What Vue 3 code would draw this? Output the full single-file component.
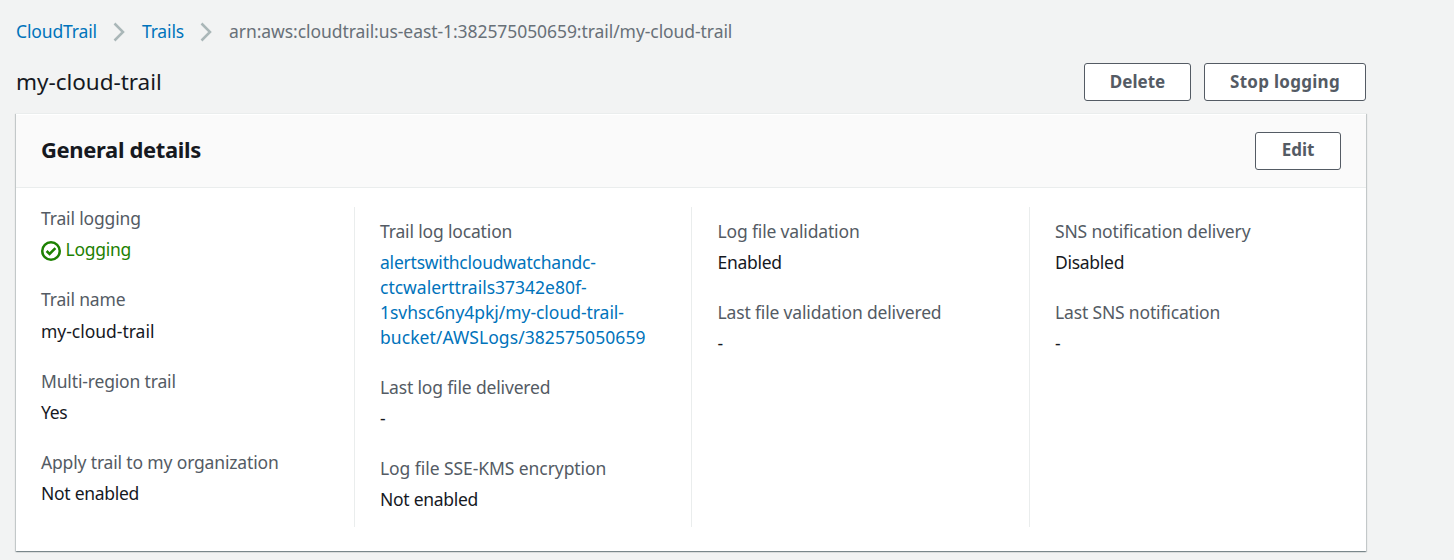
<script setup>
const columns = [
  [
    { label: 'Trail logging', value: 'Logging', kind: 'status' },
    { label: 'Trail name', value: 'my-cloud-trail', kind: 'name' },
    { label: 'Multi-region trail', value: 'Yes' },
    { label: 'Apply trail to my organization', value: 'Not enabled' },
  ],
  [
    {
      label: 'Trail log location',
      kind: 'link',
      lines: [
        'alertswithcloudwatchandc-',
        'ctcwalerttrails37342e80f-',
        '1svhsc6ny4pkj/my-cloud-trail-',
        'bucket/AWSLogs/382575050659',
      ],
    },
    { label: 'Last log file delivered', value: '-' },
    { label: 'Log file SSE-KMS encryption', value: 'Not enabled', wide: true },
  ],
  [
    { label: 'Log file validation', value: 'Enabled' },
    { label: 'Last file validation delivered', value: '-' },
  ],
  [
    { label: 'SNS notification delivery', value: 'Disabled' },
    { label: 'Last SNS notification', value: '-' },
  ],
]
</script>

<template>
  <main class="page">
    <nav class="crumbs">
      <a class="link">CloudTrail</a>
      <svg class="chevron" viewBox="0 0 12 20"><path d="M1.500 1.500 10 10l-8.500 8.500" /></svg>
      <a class="link">Trails</a>
      <svg class="chevron" viewBox="0 0 12 20"><path d="M1.500 1.500 10 10l-8.500 8.500" /></svg>
      <span class="arn">arn:aws:cloudtrail:us-east-1:382575050659:trail/my-cloud-trail</span>
    </nav>
    <header class="title-row">
      <h1>my-cloud-trail</h1>
      <div class="actions">
        <button class="delete">Delete</button>
        <button class="stop">Stop logging</button>
      </div>
    </header>
    <section class="card">
      <div class="card-head">
        <h2>General details</h2>
        <button class="edit">Edit</button>
      </div>
      <div class="columns">
        <dl v-for="(column, i) in columns" :key="i" class="column">
          <div v-for="item in column" :key="item.label" class="field">
            <dt :class="{ wide: item.wide }"><span>{{ item.label }}</span></dt>
            <dd v-if="item.kind === 'status'" class="status">
              <svg viewBox="0 0 20 20">
                <circle cx="10" cy="10" r="8.750" />
                <path d="m5.600 10 3 3 5.800-5.800" />
              </svg>
              <span>{{ item.value }}</span>
            </dd>
            <dd v-else-if="item.kind === 'link'">
              <a class="link location">
                <span v-for="line in item.lines" :key="line">{{ line }}</span>
              </a>
            </dd>
            <dd v-else :class="item.kind"><span>{{ item.value }}</span></dd>
          </div>
        </dl>
      </div>
    </section>
  </main>
</template>

<style>
body {
  background: #f2f3f3;
}
</style>

<style scoped>
.page {
  box-sizing: border-box;
  height: 560px;
  padding: 19px 88px 0 16px;
  overflow: hidden;
  font-family: "Noto Sans", "Open Sans", sans-serif;
  font-size: 17.5px;
  line-height: 25px;
  letter-spacing: -0.16px;
  color: #16191f;
}
.link {
  color: #0073bb;
}
.crumbs {
  display: flex;
  align-items: center;
  height: 25px;
}
.crumbs .link {
  letter-spacing: -0.14px;
}
.arn {
  color: #687078;
  letter-spacing: -0.07px;
}
.chevron {
  width: 12px;
  height: 20px;
  margin: 0 17px 0 16px;
  fill: none;
  stroke: #aab7b8;
  stroke-width: 2.5;
}
.title-row {
  display: flex;
  justify-content: space-between;
  align-items: center;
  height: 38px;
  margin: 19px 0 12px;
}
h1 {
  margin: 0;
  font-size: 22.5px;
  font-weight: 400;
  line-height: 38px;
  letter-spacing: -0.03px;
}
.actions {
  display: flex;
  gap: 13px;
}
button {
  box-sizing: border-box;
  height: 38px;
  padding: 0 0 2px;
  border: 1px solid #545b64;
  border-radius: 3px;
  background: #fff;
  color: #545b64;
  font-family: inherit;
  font-size: 17px;
  font-weight: 700;
  line-height: 25px;
  letter-spacing: 0;
}
.delete {
  width: 107px;
}
.stop {
  width: 162px;
  letter-spacing: 0.28px;
}
.edit {
  width: 86px;
}
.card {
  box-sizing: border-box;
  width: 1350px;
  height: 438px;
  background: #fff;
  border-top: 1px solid #eaeded;
  box-shadow: 0 1px 1px 0 rgba(0, 28, 36, 0.3), 1px 1px 1px 0 rgba(0, 28, 36, 0.15),
    -1px 1px 1px 0 rgba(0, 28, 36, 0.15);
}
.card-head {
  box-sizing: border-box;
  display: flex;
  justify-content: space-between;
  align-items: center;
  height: 74px;
  padding: 0 25px;
  background: #fafafa;
  border-top: 1px solid #fff;
  border-bottom: 1px solid #eaeded;
}
.edit {
  margin-top: -1px;
}
h2 {
  margin: -3px 0 0;
  font-size: 22px;
  font-weight: 700;
  letter-spacing: -0.36px;
}
.columns {
  display: grid;
  grid-template-columns: repeat(4, 337.5px);
  height: 320px;
  margin-top: 19px;
}
.column {
  display: flex;
  flex-direction: column;
  gap: 25px;
  margin: 0;
  padding: 11.5px 25px 0 25.5px;
  border-left: 1px solid #eaeded;
}
.column:first-child {
  margin-top: -1px;
  padding: 0 25px;
  border-left: 0;
}
.field {
  display: flex;
  flex-direction: column;
  gap: 6.25px;
}
dt {
  color: #545b64;
}
.wide {
  letter-spacing: -0.07px;
}
dd {
  margin: 0;
  letter-spacing: -0.28px;
}
.name {
  letter-spacing: -0.02px;
}
.location {
  display: flex;
  flex-direction: column;
  align-items: flex-start;
  letter-spacing: 0;
}
.location span:first-child {
  letter-spacing: -0.22px;
}
.location span:nth-child(3) {
  letter-spacing: -0.04px;
}
.location span:last-child {
  letter-spacing: 0.06px;
}
.status {
  display: flex;
  align-items: center;
  gap: 4.500px;
  color: #1d8102;
}
.status svg {
  width: 20px;
  height: 20px;
  margin-top: 2px;
  fill: none;
  stroke: currentColor;
  stroke-width: 2.5;
}
</style>
